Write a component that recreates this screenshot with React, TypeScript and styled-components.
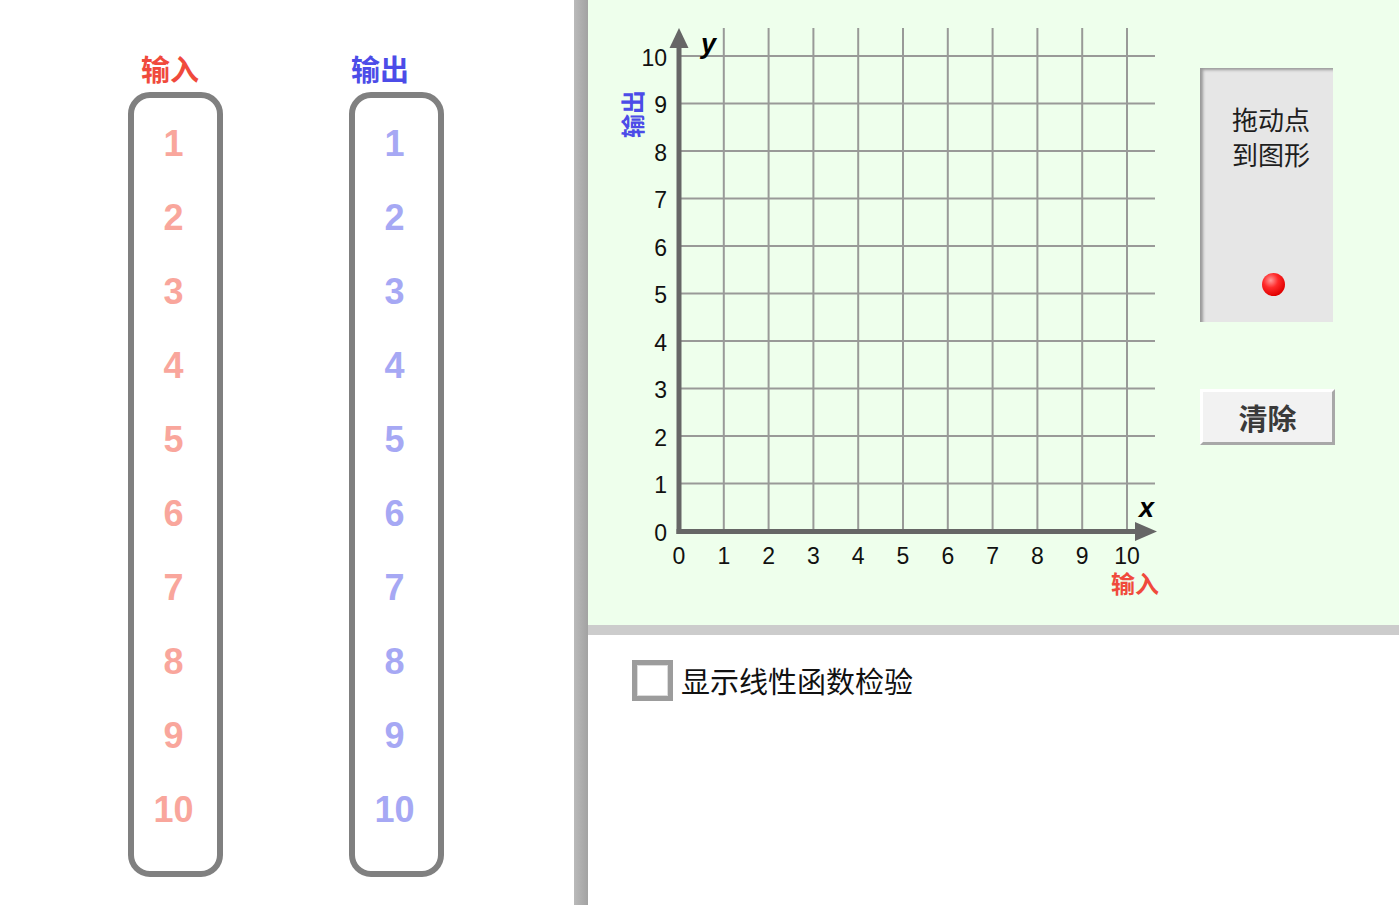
import React from "react";
import styled, { createGlobalStyle } from "styled-components";

const GlobalStyle = createGlobalStyle`
  html, body { margin: 0; padding: 0; background: #ffffff; }
  body { font-family: "Liberation Sans", "Noto Sans CJK SC", sans-serif; }
`;

const CJK = `"Noto Sans CJK SC", "Liberation Sans", sans-serif`;

const Page = styled.div`
  display: flex;
  width: 1399px;
  height: 905px;
  overflow: hidden;
`;

const LeftPane = styled.div`
  width: 574px;
  flex: none;
  display: flex;
  gap: 126px;
  padding-left: 128px;
  box-sizing: border-box;
  background: #ffffff;
`;

const Column = styled.div`
  display: flex;
  flex-direction: column;
`;

const ColumnLabel = styled.div<{ $color: string; $offset: number }>`
  margin-top: 48px;
  margin-left: ${(p) => p.$offset}px;
  height: 40px;
  line-height: 40px;
  font-family: ${CJK};
  font-weight: 700;
  font-size: 29px;
  color: ${(p) => p.$color};
`;

const ValueBox = styled.div`
  margin-top: 4px;
  width: 95px;
  height: 785px;
  box-sizing: border-box;
  border: 6px solid #808080;
  border-radius: 22px;
  padding-top: 9px;
  padding-right: 4px;
  display: flex;
  flex-direction: column;
  align-items: center;
`;

const Value = styled.div<{ $color: string }>`
  height: 74px;
  line-height: 74px;
  font-family: "Liberation Sans", Arial, sans-serif;
  font-weight: 700;
  font-size: 36px;
  color: ${(p) => p.$color};
`;

const Divider = styled.div`
  width: 14px;
  flex: none;
  background: linear-gradient(to right, #bababa, #a2a2a2);
`;

const RightPane = styled.div`
  flex: 1;
  display: flex;
  flex-direction: column;
`;

const GraphPanel = styled.div`
  height: 625px;
  flex: none;
  background: #eeffec;
  display: flex;
`;

const Chart = styled.svg`
  display: block;
  flex: none;
`;

const Side = styled.div`
  margin-left: 32px;
  padding-top: 68px;
  display: flex;
  flex-direction: column;
`;

const DragPanel = styled.div`
  width: 133px;
  height: 254px;
  box-sizing: border-box;
  background: #e6e6e6;
  box-shadow: inset 4px 3px 3px -1px #9a9a9a;
  padding-top: 33px;
  padding-left: 9px;
  display: flex;
  flex-direction: column;
  align-items: center;
`;

const DragText = styled.div`
  font-family: ${CJK};
  font-size: 26px;
  line-height: 35px;
  color: #1e1e1e;
  text-align: center;
`;

const Ball = styled.div`
  margin-top: 102px;
  margin-left: 4px;
  width: 23px;
  height: 23px;
  border-radius: 50%;
  background: radial-gradient(circle at 38% 32%, #ff9a9a 0%, #ff2a2a 35%, #e00000 75%, #b80000 100%);
`;

const ClearButton = styled.div`
  margin-top: 67px;
  width: 135px;
  height: 56px;
  box-sizing: border-box;
  border-top: 3px solid #ffffff;
  border-left: 3px solid #ffffff;
  border-bottom: 3px solid #a8a8a8;
  border-right: 3px solid #a8a8a8;
  background: #f2f2f2;
  display: flex;
  align-items: center;
  justify-content: center;
  font-family: ${CJK};
  font-weight: 700;
  font-size: 29px;
  color: #3a3a3a;
`;

const HBar = styled.div`
  height: 10px;
  flex: none;
  background: #cccccc;
`;

const Bottom = styled.div`
  flex: 1;
  background: #ffffff;
  padding: 25px 0 0 44px;
`;

const CheckRow = styled.label`
  display: flex;
  align-items: center;
`;

const CheckBox = styled.span`
  width: 41px;
  height: 41px;
  box-sizing: border-box;
  border: 5px solid #9c9c9c;
  background: #ffffff;
  box-shadow: inset 0 0 0 1px #dcdcdc;
`;

const CheckText = styled.span`
  margin-left: 8px;
  font-family: ${CJK};
  font-size: 29px;
  line-height: 41px;
  color: #111111;
`;

const nums = [1, 2, 3, 4, 5, 6, 7, 8, 9, 10];
const X0 = 679;
const Y0 = 531;
const DX = 44.8;
const DY = 47.5;

const GraphSvg: React.FC = () => {
  const xs = Array.from({ length: 11 }, (_, i) => X0 + i * DX);
  const ys = Array.from({ length: 11 }, (_, j) => Y0 - j * DY);
  return (
    <Chart width={580} height={625} viewBox="588 0 580 625">
      {xs.slice(1).map((x, i) => (
        <line key={"v" + i} x1={x} y1={28} x2={x} y2={Y0} stroke="#999a98" strokeWidth={2} />
      ))}
      {ys.slice(1).map((y, j) => (
        <line key={"h" + j} x1={X0} y1={y} x2={1155} y2={y} stroke="#999a98" strokeWidth={2} />
      ))}
      <line x1={X0} y1={534} x2={X0} y2={44} stroke="#666666" strokeWidth={5} />
      <polygon points="679,28 669.5,48 688.5,48" fill="#666666" />
      <line x1={676.5} y1={531.5} x2={1138} y2={531.5} stroke="#666666" strokeWidth={5} />
      <polygon points="1157,531.5 1135,522 1135,541" fill="#666666" />
      {ys.map((y, j) => (
        <text
          key={"yl" + j}
          x={667}
          y={y + 1.5}
          textAnchor="end"
          dominantBaseline="central"
          fontFamily="Liberation Sans, Arial, sans-serif"
          fontSize={23}
          fill="#111"
        >
          {j}
        </text>
      ))}
      {xs.map((x, i) => (
        <text
          key={"xl" + i}
          x={x}
          y={556}
          textAnchor="middle"
          dominantBaseline="central"
          fontFamily="Liberation Sans, Arial, sans-serif"
          fontSize={23}
          fill="#111"
        >
          {i}
        </text>
      ))}
      <text x={701} y={53} fontFamily="Liberation Sans, Arial, sans-serif" fontSize={27} fontWeight={700} fontStyle="italic" fill="#000">
        y
      </text>
      <text x={1139} y={517} fontFamily="Liberation Sans, Arial, sans-serif" fontSize={27} fontWeight={700} fontStyle="italic" fill="#000">
        x
      </text>
      <text
        x={1135}
        y={582}
        textAnchor="middle"
        dominantBaseline="central"
        fontFamily="Noto Sans CJK SC, sans-serif"
        fontSize={24}
        fontWeight={700}
        fill="#f04a3c"
      >
        输入
      </text>
      <text
        x={0}
        y={0}
        transform="translate(631 114) rotate(-90)"
        textAnchor="middle"
        dominantBaseline="central"
        fontFamily="Noto Sans CJK SC, sans-serif"
        fontSize={24}
        fontWeight={700}
        fill="#4c4ce8"
      >
        输出
      </text>
    </Chart>
  );
};

export default function App() {
  return (
    <>
      <GlobalStyle />
      <Page>
        <LeftPane>
          <Column>
            <ColumnLabel $color="#f04a3c" $offset={13}>输入</ColumnLabel>
            <ValueBox>
              {nums.map((n) => (
                <Value key={n} $color="#f9a69c">{n}</Value>
              ))}
            </ValueBox>
          </Column>
          <Column>
            <ColumnLabel $color="#4c4ce8" $offset={2}>输出</ColumnLabel>
            <ValueBox>
              {nums.map((n) => (
                <Value key={n} $color="#a6a8f4">{n}</Value>
              ))}
            </ValueBox>
          </Column>
        </LeftPane>
        <Divider />
        <RightPane>
          <GraphPanel>
            <GraphSvg />
            <Side>
              <DragPanel>
                <DragText>
                  拖动点
                  <br />
                  到图形
                </DragText>
                <Ball />
              </DragPanel>
              <ClearButton>清除</ClearButton>
            </Side>
          </GraphPanel>
          <HBar />
          <Bottom>
            <CheckRow>
              <CheckBox />
              <CheckText>显示线性函数检验</CheckText>
            </CheckRow>
          </Bottom>
        </RightPane>
      </Page>
    </>
  );
}
